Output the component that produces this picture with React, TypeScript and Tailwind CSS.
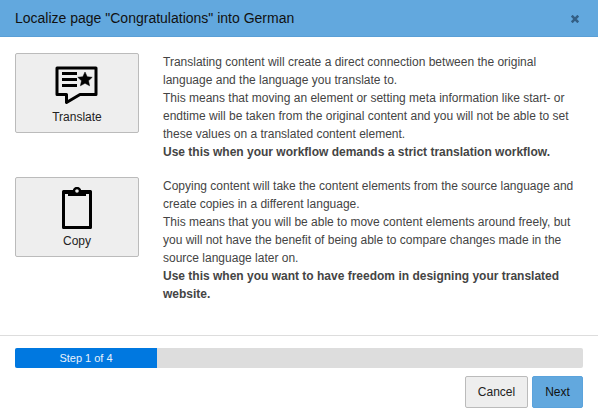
export default function App() {
  return (
    <div className="flex h-[420px] w-[598px] flex-col bg-white font-['Liberation_Sans',Arial,sans-serif] text-[#333]">
      <header className="flex h-[37px] items-center justify-between border-b border-[#5a9fd6] bg-[#62a8de] pl-[15px] pr-[19px]">
        <h1 className="text-[14px] font-normal text-[#111]">Localize page "Congratulations" into German</h1>
        <svg width="8" height="8" viewBox="0 0 8 8" className="mt-[1px]">
          <path d="M0.7 0.7 L7.3 7.3 M7.3 0.7 L0.7 7.3" stroke="#335f85" strokeWidth="2.6" />
        </svg>
      </header>
      <main className="flex flex-1 flex-col gap-4 pl-[15px] pr-[15px] pt-[16px]">
        <section className="flex gap-6">
          <button className="flex h-20 w-[124px] shrink-0 flex-col items-center rounded-[2px] border border-[#bbb] bg-[#eee] pt-[12px] text-[12px] text-[#222]">
            <svg width="44" height="40" viewBox="0 0 44 40" className="mb-[2px]">
              <path d="M2 2 H41 V28.5 H25 L11.5 36.5 V28.5 H2 Z" fill="none" stroke="#000" strokeWidth="3" strokeLinejoin="round" />
              <path d="M7 7.5 H22 M7 13.5 H22 M7 19.5 H22" stroke="#000" strokeWidth="3" />
              <path d="M30 6 L32.2 10.7 L37.2 11.3 L33.5 14.8 L34.6 19.8 L30 17.3 L25.4 19.8 L26.5 14.8 L22.8 11.3 L27.8 10.7 Z" fill="#000" stroke="#000" strokeWidth="0.5" />
            </svg>
            <span>Translate</span>
          </button>
          <div className="text-[12px] leading-[18px] text-[#444]">
            <p>Translating content will create a direct connection between the original language and the language you translate to.</p>
            <p>This means that moving an element or setting meta information like start- or endtime will be taken from the original content and you will not be able to set these values on a translated content element.</p>
            <p className="font-bold">Use this when your workflow demands a strict translation workflow.</p>
          </div>
        </section>
        <section className="flex gap-6">
          <button className="flex h-20 w-[124px] shrink-0 flex-col items-center rounded-[2px] border border-[#bbb] bg-[#eee] pt-[9px] text-[12px] text-[#222]">
            <svg width="30" height="42" viewBox="0 0 30 42" className="mb-[3px]">
              <path d="M1.5 4.5 H28.5 V40.5 H1.5 Z" fill="none" stroke="#000" strokeWidth="3" strokeLinejoin="round" />
              <path d="M1.5 3 H28.5 V7 H24 V9 H6 V7 H1.5 Z" fill="#000" />
              <circle cx="15" cy="4" r="3" fill="#eee" stroke="#000" strokeWidth="2.4" />
            </svg>
            <span>Copy</span>
          </button>
          <div className="text-[12px] leading-[18px] text-[#444]">
            <p>Copying content will take the content elements from the source language and create copies in a different language.</p>
            <p>This means that you will be able to move content elements around freely, but you will not have the benefit of being able to compare changes made in the source language later on.</p>
            <p className="font-bold">Use this when you want to have freedom in designing your translated website.</p>
          </div>
        </section>
      </main>
      <footer className="flex h-[85px] flex-col gap-2 border-t border-[#ddd] px-[15px] pt-3">
        <div className="flex h-5 overflow-hidden rounded-[2px] bg-[#ddd]">
          <div className="flex w-[142px] items-center justify-center bg-[#0078e0] text-[11px] text-[#e8f2fc]">Step 1 of 4</div>
        </div>
        <div className="flex justify-end gap-1">
          <button className="h-8 w-[63px] rounded-[2px] border border-[#bbb] bg-[#eee] text-[12px] text-[#222]">Cancel</button>
          <button className="h-8 w-[51px] rounded-[2px] border border-[#5ba3dc] bg-[#62a8de] text-[12px] text-[#111]">Next</button>
        </div>
      </footer>
    </div>
  );
}
